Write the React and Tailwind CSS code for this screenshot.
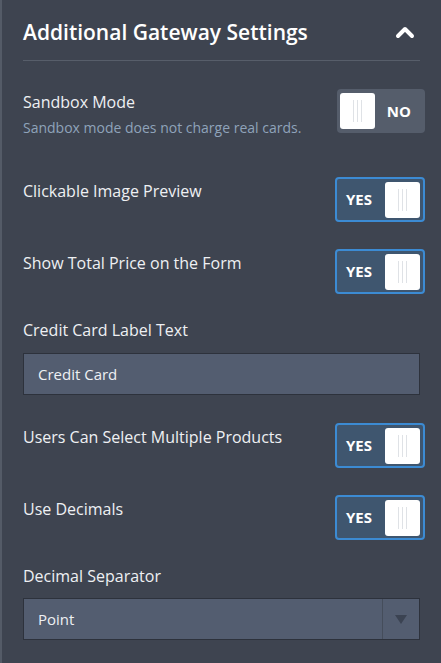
import React from "react";

const Knob = () => (
  <div className="flex h-[36px] w-[35px] items-center justify-center gap-[3px] rounded-[3px] bg-white">
    <span className="h-[22px] w-px bg-[#dfe2e6]" />
    <span className="h-[22px] w-px bg-[#dfe2e6]" />
    <span className="h-[22px] w-px bg-[#dfe2e6]" />
  </div>
);

const Toggle = ({ on }) =>
  on ? (
    <div className="flex h-[45px] w-[90px] items-center justify-between rounded-[4px] border-2 border-[#3c8bd3] bg-[#3f566f] pl-[9px] pr-[3px]">
      <span className="text-[15px] font-bold text-white">YES</span>
      <Knob />
    </div>
  ) : (
    <div className="flex h-[44px] w-[88px] items-center justify-between rounded-[4px] bg-[#555d6b] pl-[3px] pr-[14px]">
      <Knob />
      <span className="text-[15px] font-bold text-white">NO</span>
    </div>
  );

const ToggleRow = ({ label, on, className = "" }) => (
  <div className={`flex items-start justify-between ${className}`}>
    <div className="pt-[2px] text-[16px] leading-[24px] text-[#eef0f3]">{label}</div>
    <div className="-mr-[5px]">
      <Toggle on={on} />
    </div>
  </div>
);

export default function App() {
  return (
    <div
      className="min-h-[663px] w-[441px] border-l-2 border-[#545b67] bg-[#3e4450] px-[21px] pb-6"
      style={{ fontFamily: '"Open Sans", "Noto Sans", sans-serif' }}
    >
      {/* header */}
      <div className="flex items-center justify-between border-b border-[#575e6a] pb-[13px] pt-[17px]">
        <h2 className="text-[21px] font-semibold leading-[30px] text-white">
          Additional Gateway Settings
        </h2>
        <svg width="20" height="14" viewBox="0 0 20 14" className="mr-[5px]">
          <polyline
            points="3,11 10,4 17,11"
            fill="none"
            stroke="white"
            strokeWidth="4"
            strokeLinecap="round"
            strokeLinejoin="round"
          />
        </svg>
      </div>

      {/* sandbox */}
      <div className="mt-[28px] flex items-start justify-between">
        <div>
          <div className="pt-px text-[16px] leading-[24px] text-[#eef0f3]">Sandbox Mode</div>
          <div className="mt-[5px] text-[14px] leading-[18px] text-[#8fa3ba]">
            Sandbox mode does not charge real cards.
          </div>
        </div>
        <div className="-mr-[5px]">
          <Toggle on={false} />
        </div>
      </div>

      <ToggleRow label="Clickable Image Preview" on className="mt-[40px]" />
      <ToggleRow label="Show Total Price on the Form" on className="mt-[27px]" />

      <div className="mt-[24px] text-[16px] leading-[24px] text-[#eef0f3]">Credit Card Label Text</div>
      <div className="mt-[11px] flex h-[42px] items-center border border-[#2d323c] bg-[#535d70] px-[14px] text-[15px] text-[#eef0f3]">
        Credit Card
      </div>

      <ToggleRow label="Users Can Select Multiple Products" on className="mt-[28px]" />
      <ToggleRow label="Use Decimals" on className="mt-[27px]" />

      <div className="mt-[24px] text-[16px] leading-[24px] text-[#eef0f3]">Decimal Separator</div>
      <div className="mt-[10px] flex h-[42px] items-stretch border border-[#2d323c] bg-[#535d70] text-[15px] text-[#eef0f3]">
        <div className="flex flex-1 items-center px-[14px]">Point</div>
        <div className="flex w-[37px] items-center justify-center border-l border-[#454d5b]">
          <svg width="12" height="10" viewBox="0 0 12 10">
            <polygon points="0,1 12,1 6,10" fill="#3b4352" />
          </svg>
        </div>
      </div>
    </div>
  );
}
